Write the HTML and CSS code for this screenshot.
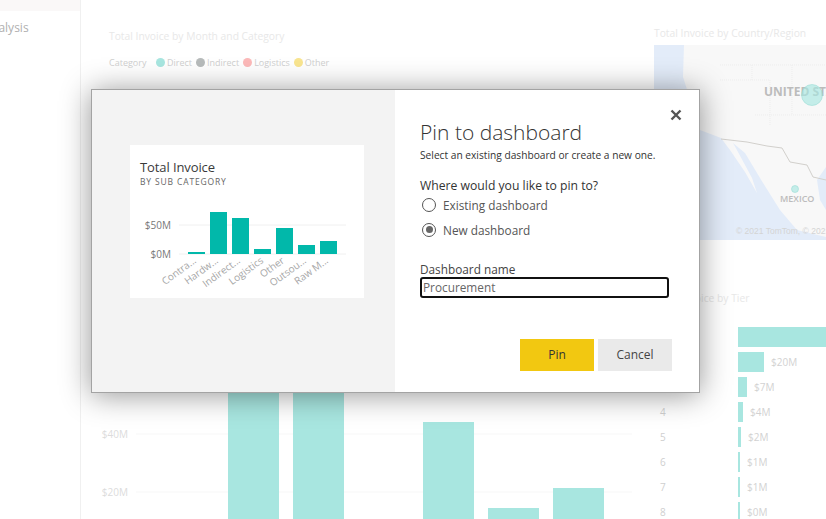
FILE: index.html
```html
<!DOCTYPE html>
<html lang="en">
<head>
  <meta charset="UTF-8">
  <meta name="viewport" content="width=device-width, initial-scale=1.0">
  <title>Pin to dashboard</title>
  <link rel="stylesheet" href="styles.css">
</head>

<body>
 <div class="report">
   <!-- pages list -->
   <div class="sidebar">
     <div class="sidebarTop"></div>
     <div class="pageName">Spend Analysis</div>
   </div>

   <!-- month chart -->
   <div class="monthVisual">
     <div class="visualTitle">Total Invoice by Month and Category</div>
     <div class="legend">
       <span class="legendName">Category</span>
       <span class="legendItem"><i class="dot dotDirect"></i>Direct</span>
       <span class="legendItem"><i class="dot dotIndirect"></i>Indirect</span>
       <span class="legendItem"><i class="dot dotLogistics"></i>Logistics</span>
       <span class="legendItem"><i class="dot dotOther"></i>Other</span>
     </div>
     <svg class="monthChart" viewBox="81 75 573 444" width="573" height="444">
       <line class="gridLine" x1="136" y1="434" x2="632" y2="434"/>
       <line class="gridLine" x1="136" y1="492" x2="632" y2="492"/>
       <text class="axisText" x="128" y="438" text-anchor="end">$40M</text>
       <text class="axisText" x="128" y="496" text-anchor="end">$20M</text>
       <rect class="fadedBar" x="228" y="360" width="51" height="159"/>
       <rect class="fadedBar" x="293" y="360" width="51" height="159"/>
       <rect class="fadedBar" x="423" y="422" width="51" height="97"/>
       <rect class="fadedBar" x="488" y="508" width="51" height="11"/>
       <rect class="fadedBar" x="553" y="488" width="51" height="31"/>
     </svg>
   </div>

   <div class="rightColumn">
     <!-- map -->
     <div class="mapVisual">
       <div class="visualTitle">Total Invoice by Country/Region</div>
       <svg class="map" viewBox="654 45 172 195" width="172" height="195">
         <rect x="654" y="45" width="172" height="195" fill="#e3ecf9"/>
         <path fill="#f8f8f8" d="M684 45L683 77L700 130L721 138L730 150L745 172L757 193L752 178L738 152L733 143L745 153L760 178L780 210L797 230L826 237L826 210L820 200L817 180L826 167L826 45Z"/>
         <path class="border" d="M721 139L747 142L767 146L782 148L790 162L807 165L813 177L826 180"/>
         <path class="stateLine" d="M720 65H826M720 80H770V125M752 80V65M755 115H826M792 65V115"/>
         <text class="mapLabel" x="764" y="96">UNITED STATES</text>
         <text class="mapLabel mapLabelSmall" x="780" y="202">MEXICO</text>
         <circle class="bubble" cx="812" cy="95" r="10.5"/>
         <circle class="bubble" cx="795" cy="189" r="3.5"/>
         <text class="mapCredit" x="736" y="234">© 2021 TomTom, © 2021 Microsoft</text>
       </svg>
     </div>

     <!-- tier bars -->
     <div class="tierVisual">
       <div class="visualTitle tierTitle">Total Invoice by Tier</div>
       <div class="tierRows">
         <div class="tierRow"><span class="tierNum"></span><span class="tierBar" style="width:100px"></span></div>
         <div class="tierRow"><span class="tierNum"></span><span class="tierBar" style="width:26px"></span><span class="tierVal">$20M</span></div>
         <div class="tierRow"><span class="tierNum"></span><span class="tierBar" style="width:9px"></span><span class="tierVal">$7M</span></div>
         <div class="tierRow"><span class="tierNum">4</span><span class="tierBar" style="width:5px"></span><span class="tierVal">$4M</span></div>
         <div class="tierRow"><span class="tierNum">5</span><span class="tierBar" style="width:3px"></span><span class="tierVal">$2M</span></div>
         <div class="tierRow"><span class="tierNum">6</span><span class="tierBar" style="width:2px"></span><span class="tierVal">$1M</span></div>
         <div class="tierRow"><span class="tierNum">7</span><span class="tierBar" style="width:2px"></span><span class="tierVal">$1M</span></div>
         <div class="tierRow"><span class="tierNum">8</span><span class="tierBar" style="width:2px"></span><span class="tierVal">$0M</span></div>
       </div>
     </div>
   </div>
 </div>

 <!-- dialog -->
 <div class="dialog">
   <div class="previewPane">
     <div class="tileCard">
       <div class="tileTitle">Total Invoice</div>
       <div class="tileSub">BY SUB CATEGORY</div>
       <svg class="tileChart" viewBox="130 195 234 103" width="234" height="103">
         <line class="tileGrid" x1="179" y1="225" x2="346" y2="225"/>
         <line class="tileGrid" x1="179" y1="254" x2="346" y2="254"/>
         <text class="tileAxis" x="171" y="229" text-anchor="end">$50M</text>
         <text class="tileAxis" x="171" y="258" text-anchor="end">$0M</text>
         <rect class="tileBar" x="188" y="252" width="17" height="2"/>
         <rect class="tileBar" x="210" y="212" width="17" height="42"/>
         <rect class="tileBar" x="232" y="218" width="17" height="36"/>
         <rect class="tileBar" x="254" y="249" width="17" height="5"/>
         <rect class="tileBar" x="276" y="228" width="17" height="26"/>
         <rect class="tileBar" x="298" y="245" width="17" height="9"/>
         <rect class="tileBar" x="320" y="241" width="17" height="13"/>
         <text class="tileCat" text-anchor="end" transform="translate(197 262) rotate(-36)">Contra...</text>
         <text class="tileCat" text-anchor="end" transform="translate(219 262) rotate(-36)">Hardw...</text>
         <text class="tileCat" text-anchor="end" transform="translate(241 262) rotate(-36)">Indirect...</text>
         <text class="tileCat" text-anchor="end" transform="translate(264 262) rotate(-36)">Logistics</text>
         <text class="tileCat" text-anchor="end" transform="translate(285 262) rotate(-36)">Other</text>
         <text class="tileCat" text-anchor="end" transform="translate(307 262) rotate(-36)">Outsou...</text>
         <text class="tileCat" text-anchor="end" transform="translate(329 262) rotate(-36)">Raw M...</text>
       </svg>
     </div>
   </div>

   <div class="formPane">
     <h2 class="dialogTitle">Pin to dashboard</h2>
     <div class="dialogSub">Select an existing dashboard or create a new one.</div>
     <div class="question">Where would you like to pin to?</div>
     <label class="radioRow"><span class="radio"></span>Existing dashboard</label>
     <label class="radioRow"><span class="radio radioOn"></span>New dashboard</label>
     <div class="nameLabel">Dashboard name</div>
     <div class="nameInput">Procurement</div>
     <div class="buttons">
       <div class="btn btnPin">Pin</div>
       <div class="btn btnCancel">Cancel</div>
     </div>
   </div>

   <svg class="closeIcon" viewBox="0 0 12 12" width="12" height="12">
     <path d="M1.5 1.5L10.5 10.5M10.5 1.5L1.5 10.5"/>
   </svg>
 </div>
</body>
</html>
```

FILE: styles.css
```css
html,body{margin:0;padding:0;width:826px;height:519px;overflow:hidden;background:#fff;
          font-family:"Open Sans","Noto Sans",sans-serif;}
svg{display:block}
text{font-family:"Open Sans","Noto Sans",sans-serif}

/* report behind the dialog */
.report{display:grid;grid-template-columns:81px 573px 172px;height:519px}
.sidebar{border-right:1px solid #f0f0f0;overflow:hidden}
.sidebarTop{height:11px;background:#faf8f8}
.pageName{margin:8px 0 0 -55px;font-size:12px;line-height:18px;color:#b0b0b0;white-space:nowrap}

.visualTitle{font-size:10.3px;line-height:14px;color:#e8e8e8;white-space:nowrap}
.monthVisual{padding-top:29px}
.monthVisual .visualTitle{padding-left:28px}
.legend{display:flex;align-items:center;margin:12px 0 0 28px;height:14px;font-size:9px;color:#cfcfcf}
.legendName{margin-right:8px;width:39px}
.legendItem{display:flex;align-items:center;margin-right:4px}
.dot{width:9px;height:9px;border-radius:50%;margin-right:2px}
.dotDirect{background:#a8e6e0}
.dotIndirect{background:#b7bbbb}
.dotLogistics{background:#fcb9b9}
.dotOther{background:#f9e590}
.monthChart{margin-top:6px}
.gridLine{stroke:#f7f7f7;stroke-width:1}
.axisText{font-size:10px;fill:#dcdcdc}
.fadedBar{fill:#a8e6e0}

.rightColumn{display:flex;flex-direction:column}
.mapVisual{padding-top:26px}
.map{margin-top:5px}
.border{fill:none;stroke:#d2d0cc;stroke-width:1}
.stateLine{fill:none;stroke:#ededed;stroke-width:1;stroke-dasharray:1 1}
.mapLabel{font-size:12px;font-weight:700;fill:#bcbcbc}
.mapLabelSmall{font-size:9px;font-weight:600}
.bubble{fill:#a8e6e0;fill-opacity:.65;stroke:#8fd8d1;stroke-width:.5}
.mapCredit{font-size:8.5px;fill:#d4d4d4;font-family:"Liberation Sans",sans-serif}

.tierVisual{margin-top:51px}
.tierTitle{text-align:right;padding-right:82px}
.tierRows{margin-top:22px}
.tierRow{display:flex;align-items:center;height:20px;margin-bottom:5px}
.tierNum{flex:none;width:84px;box-sizing:border-box;padding-left:6px;font-size:10px;color:#cfcfcf}
.tierBar{flex:none;height:20px;background:#a8e6e0}
.tierVal{margin-left:7px;font-size:10px;color:#d2d2d2}

/* dialog */
.dialog{position:absolute;left:91px;top:89px;width:607px;height:302px;display:flex;background:#fff;
        border:1px solid #a3a3a3;box-shadow:0 2px 28px rgba(0,0,0,.42)}
.previewPane{width:303px;background:#f3f3f3;padding:55px 0 0 38px;box-sizing:border-box}
.tileCard{width:234px;height:153px;background:#fff;overflow:hidden}
.tileTitle{margin:14px 0 0 10px;font-size:13px;line-height:17px;letter-spacing:-.1px;color:#3a3a3a}
.tileSub{margin-left:10px;font-size:8.5px;line-height:12px;letter-spacing:.85px;color:#666}
.tileChart{margin-top:7px}
.tileGrid{stroke:#f0f0f0;stroke-width:1}
.tileAxis{font-size:10px;fill:#777}
.tileBar{fill:#01b8aa}
.tileCat{font-size:10px;fill:#a6a6a6}

.formPane{flex:1;padding:28px 27px 0 25px;color:#333}
.dialogTitle{margin:0;font-size:21px;font-weight:300;line-height:28px;color:#333}
.dialogSub{margin-top:2px;font-size:10.2px;line-height:14px}
.question{margin-top:15px;font-size:12.2px;font-weight:500;line-height:17px;color:#333}
.radioRow{display:flex;align-items:center;height:25px;margin-top:-2px;margin-bottom:2px;font-size:11.8px;color:#555}
.radio{width:12px;height:12px;border:1px solid #555;border-radius:50%;margin:0 7px 0 2px;position:relative}
.radioOn::after{content:"";position:absolute;left:2.5px;top:2.5px;width:7px;height:7px;border-radius:50%;background:#666}
.nameLabel{margin-top:19px;font-size:11.8px;line-height:16px;color:#444}
.nameInput{height:17px;border:2px solid #111;border-radius:3px;width:244px;padding-left:1px;
           font-size:11.8px;line-height:17px;color:#666}
.buttons{display:flex;justify-content:flex-end;gap:4px;margin-top:41px}
.btn{width:74px;height:32px;line-height:32px;text-align:center;font-size:12px}
.btnPin{background:#f2c811;color:#333}
.btnCancel{background:#eaeaea;color:#444}
.closeIcon{position:absolute;left:578px;top:19px}
.closeIcon path{fill:none;stroke:#555;stroke-width:2.4}
```
